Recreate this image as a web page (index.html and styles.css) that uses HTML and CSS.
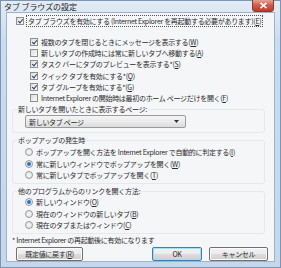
FILE: index.html
```html
<!DOCTYPE html>
<html lang="ja">
<head>
<meta charset="UTF-8">
<title>タブ ブラウズの設定</title>
<link rel="stylesheet" href="styles.css">
</head>
<body>

<div class="window">
  <div class="titlebar">
    <span class="title">タブ ブラウズの設定</span>
    <span class="close">
      <svg width="9" height="7" viewBox="0 0 9 7"><path d="M1.5 0.8 L7.5 6.2 M7.5 0.8 L1.5 6.2" stroke="#fff" stroke-width="1.6"/></svg>
    </span>
  </div>

  <div class="client">
    <div class="row main">
      <span class="box checked"></span>
      <span class="focus">タブ ブラウズを有効にする (Internet Explorer を再起動する必要があります)(<u>E</u>)</span>
    </div>

    <div class="options">
      <div class="row"><span class="box checked"></span>複数のタブを閉じるときにメッセージを表示する(<u>W</u>)</div>
      <div class="row"><span class="box"></span>新しいタブの作成時には常に新しいタブへ移動する(<u>A</u>)</div>
      <div class="row"><span class="box checked"></span>タスク バーにタブのプレビューを表示する*(<u>S</u>)</div>
      <div class="row"><span class="box checked"></span>クイック タブを有効にする*(<u>Q</u>)</div>
      <div class="row"><span class="box checked"></span>タブ グループを有効にする*(<u>G</u>)</div>
      <div class="row"><span class="box"></span>Internet Explorer の開始時は最初のホーム ページだけを開く(<u>F</u>)</div>
    </div>

    <fieldset class="group">
      <legend>新しいタブを開いたときに表示するページ:</legend>
      <div class="combo">
        <span>新しいタブ ページ</span>
        <svg width="7" height="5" viewBox="0 0 7 5"><path d="M1 1 L6 1 L3.5 4 Z" fill="#333"/></svg>
      </div>
    </fieldset>

    <fieldset class="group">
      <legend>ポップアップの発生時</legend>
      <div class="row radio-row"><span class="dot"></span>ポップアップを開く方法を Internet Explorer で自動的に判定する(<u>I</u>)</div>
      <div class="row radio-row"><span class="dot on"></span>常に新しいウィンドウでポップアップを開く(<u>W</u>)</div>
      <div class="row radio-row"><span class="dot"></span>常に新しいタブでポップアップを開く(<u>T</u>)</div>
    </fieldset>

    <fieldset class="group">
      <legend>他のプログラムからのリンクを開く方法:</legend>
      <div class="row radio-row"><span class="dot on"></span>新しいウィンドウ(<u>O</u>)</div>
      <div class="row radio-row"><span class="dot"></span>現在のウィンドウの新しいタブ(<u>B</u>)</div>
      <div class="row radio-row"><span class="dot"></span>現在のタブまたはウィンドウ(<u>C</u>)</div>
    </fieldset>

    <div class="note">* Internet Explorer の再起動後に有効になります</div>

    <div class="buttons">
      <button class="btn reset">既定値に戻す(<u>R</u>)</button>
      <span class="spacer"></span>
      <button class="btn ok">OK</button>
      <button class="btn cancel">キャンセル</button>
    </div>
  </div>
</div>

</body>
</html>
```

FILE: styles.css
```css
body {
  margin: 0;
  padding: 0;
  font-family: "Noto Sans CJK JP", "Noto Sans", sans-serif;
  font-size: 7px;
  letter-spacing: -0.3px;
  color: #2a2a2a;
  background: #c6d9ee;
}
u {
  text-decoration: underline;
  text-underline-offset: 1px;
}
.window {
  width: 281px;
  height: 268px;
  display: flex;
  flex-direction: column;
  background: linear-gradient(#e3ecf6, #cadcef 40px, #c4d7ec);
  box-sizing: border-box;
  border: 1px solid #7d95b0;
}
.titlebar {
  height: 17px;
  display: flex;
  align-items: center;
  padding: 0 6px 0 3px;
}
.title {
  font-size: 8px;
  letter-spacing: -0.1px;
  color: #1a1a1a;
  flex: 1;
}
.close {
  width: 22px;
  height: 13px;
  margin-top: -3px;
  border: 1px solid #8a3a35;
  border-radius: 0 0 3px 3px;
  background: linear-gradient(#e8a093, #cf5a48 50%, #c03a2a);
  display: flex;
  align-items: center;
  justify-content: center;
  box-sizing: border-box;
}
.client {
  flex: 1;
  margin: 0 5px 5px 5px;
  background: #f5f6f8;
  border: 1px solid #9fb2c8;
  padding: 2px 9px 0 5px;
  display: flex;
  flex-direction: column;
}
.row {
  display: flex;
  align-items: center;
  height: 11.3px;
  white-space: nowrap;
}
.main {
  height: 12px;
  padding-left: 4px;
}
.focus {
  outline: 1px dotted #555;
  outline-offset: 0;
  padding: 0 1px;
}
.options {
  margin-top: 9px;
  padding-left: 18px;
}
.box {
  width: 8px;
  height: 8px;
  box-sizing: border-box;
  border: 1px solid #8e8f8f;
  background: linear-gradient(135deg, #dcdcdc, #fbfbfb);
  margin-right: 3px;
  flex: none;
  position: relative;
}
.box.checked::after {
  content: "";
  position: absolute;
  left: 2px;
  top: 0;
  width: 2px;
  height: 4px;
  border: solid #2c3e6c;
  border-width: 0 1.3px 1.3px 0;
  transform: rotate(40deg);
}
.group {
  margin: 0;
  padding: 0 0 2px 0;
  border: 1px solid #e6e8eb;
  border-radius: 3px;
  min-width: 0;
}
.group legend {
  padding: 0;
  margin-left: 5px;
  height: 11.3px;
  line-height: 11.3px;
}
.group + .group {
  margin-top: 2px;
}
.combo {
  margin: 0 0 2px 12px;
  width: 161px;
  height: 13px;
  box-sizing: border-box;
  border: 1px solid #9a9a9a;
  border-radius: 2px;
  background: linear-gradient(#f4f4f4, #ebebeb 50%, #dcdcdc);
  display: flex;
  align-items: center;
  justify-content: space-between;
  padding: 0 5px 0 3px;
}
.radio-row {
  padding-left: 12px;
}
.dot {
  width: 8px;
  height: 8px;
  box-sizing: border-box;
  border-radius: 50%;
  border: 1px solid #9a9a9a;
  background: radial-gradient(circle, #f8f8f8, #dcdcdc);
  margin-right: 3px;
  flex: none;
}
.dot.on {
  background: radial-gradient(circle, #1f5fa8 0, #3a8ad8 1.6px, #e8eef5 2.4px, #d8dde3 4px);
}
.note {
  height: 11.3px;
  line-height: 11.3px;
  margin-top: 1px;
}
.buttons {
  display: flex;
  margin: 1px -3px 0 4px;
}
.spacer {
  flex: 1;
}
.btn {
  font-family: inherit;
  font-size: 7px;
  letter-spacing: -0.3px;
  color: #2a2a2a;
  height: 14px;
  padding: 0;
  border: 1px solid #707070;
  border-radius: 2px;
  background: linear-gradient(#f3f3f3, #ebebeb 50%, #dddddd 51%, #cfcfcf);
  box-shadow: inset 0 0 0 1px #fcfcfc;
}
.reset {
  width: 67px;
}
.ok {
  width: 50px;
  margin-right: 7px;
  border-color: #3c7fb1;
  box-shadow: inset 0 0 0 1px #9ee0fb;
}
.cancel {
  width: 59px;
}
```
